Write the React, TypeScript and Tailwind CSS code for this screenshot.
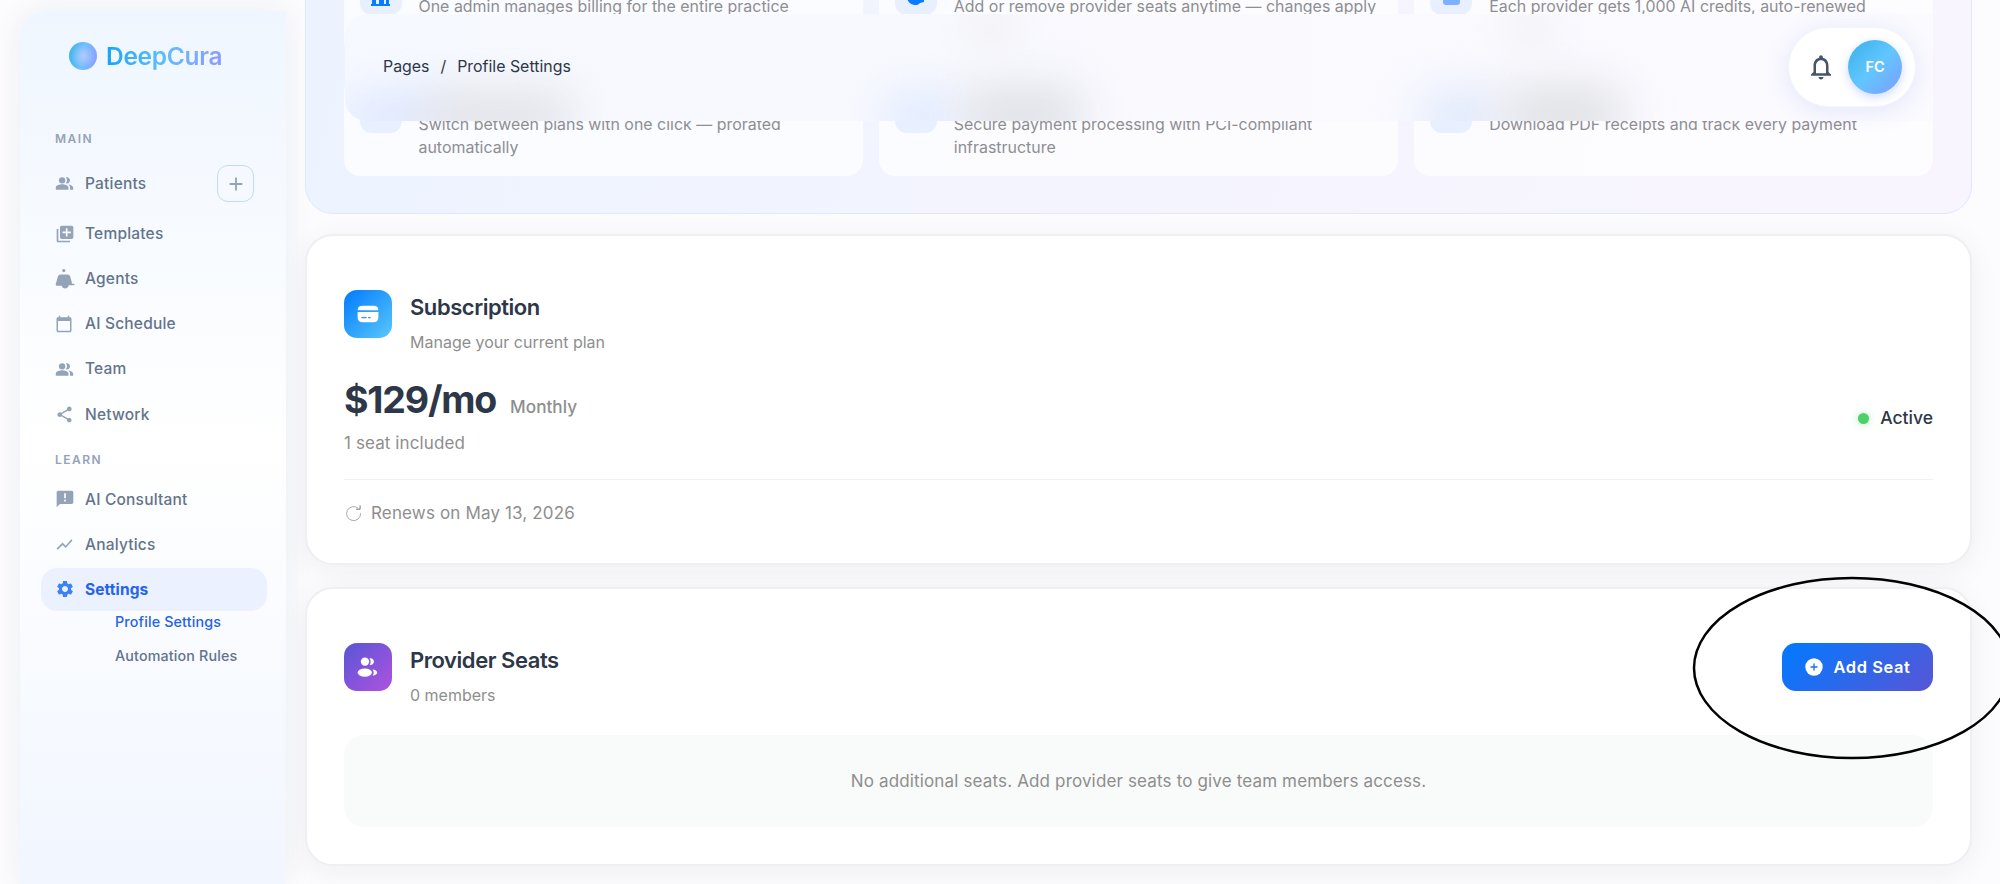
import type { ReactNode } from "react";
import { clsx } from "clsx";
import {
  MdAdd,
  MdAnnouncement,
  MdCalendarToday,
  MdLibraryAdd,
  MdNotificationsNone,
  MdPeopleAlt,
  MdSettings,
  MdShare,
  MdShowChart,
} from "react-icons/md";

function AgentIcon() {
  return (
    <svg width="20" height="20" viewBox="0 0 20 20" fill="currentColor">
      <circle cx="8.8" cy="1.6" r="1.6" />
      <path d="M5.8 5.4h6.4c1.6 0 2.6.8 3 2.2l2 7.1h1.500c.5 0 .8.400.8.900 0 .4-.3.700-.8.700h-4.900c-.5 1.900-1.800 3.100-3.600 3.100-1.900 0-3.200-1-3.600-2.600H2.200c-1.200 0-1.700-.8-1.400-1.900L2.900 7.600C3.300 6.200 4.300 5.400 5.800 5.400z" />
    </svg>
  );
}

function CardIcon() {
  return (
    <svg width="22" height="18" viewBox="0 0 22 18">
      <path d="M.6 5.300C.8 2.200 2.400.8 5.500.8h11c3.100 0 4.700 1.400 4.900 4.500z" fill="white" />
      <path d="M.6 6.900h20.800v5c0 3.400-1.600 5.300-5 5.300H5.600c-3.400 0-5-1.900-5-5.300z" fill="white" />
      <path d="M4.800 12.700h4.300M11.600 12.700h1.600" stroke="#2f95ff" strokeWidth="1.200" strokeLinecap="round" />
    </svg>
  );
}

function MembersIcon() {
  return (
    <svg width="22" height="20" viewBox="0 0 22 20" fill="white">
      <circle cx="8" cy="4.600" r="4.200" />
      <ellipse cx="7.800" cy="15.600" rx="7.200" ry="4.200" />
      <path d="M12.600 1.200c2.500-.4 4.300 1.200 4.300 3.400 0 2.300-1.800 3.800-4.300 3.400 1.400-2.100 1.400-4.700 0-6.800z" />
      <path d="M15.500 12.600c2.700.2 4.700 1.400 4.700 3s-1.900 2.900-4.600 3.100c1.500-1.800 1.500-4.300-.1-6.100z" />
    </svg>
  );
}

function NavItem({ icon, label, active, action }: { icon: ReactNode; label: string; active?: boolean; action?: ReactNode }) {
  return (
    <div
      className={clsx(
        "flex h-[43px] items-center rounded-[16px] pl-[14px] pr-[13px] text-[15.500px]",
        active ? "bg-[#ebf1ff] font-bold tracking-[0.1px] text-[#2563eb]" : "font-medium tracking-[0.2px] text-[#64748b]",
      )}
    >
      <span className={clsx("flex w-[30px] shrink-0 items-center", active ? "text-[#3b82f6]" : "text-[#94a3b8]")}>{icon}</span>
      <span className="flex-1">{label}</span>
      {action}
    </div>
  );
}

function Sidebar() {
  return (
    <aside className="mt-[11px] ml-5 h-[873px] w-[266px] shrink-0 rounded-tl-[26px] bg-linear-to-b from-[#eff6ff] via-white to-[#f1f6ff] pr-[19px] pl-[21px] shadow-[0_0_30px_rgba(30,41,90,0.07)]">
      <div className="flex h-[89px] items-center gap-[9px] pl-[28px]">
        <div className="size-7 rounded-full bg-[radial-gradient(circle_at_50%_50%,rgba(200,205,255,0.75),transparent_60%),linear-gradient(100deg,#3db4e6,#6fc0ff_50%,#8f9cff)]" />
        <div className="bg-linear-to-r from-[#0ea5f5] via-[#5cbcff] to-[#8d9bff] bg-clip-text text-[24.500px] leading-[34px] font-semibold tracking-[-0.300px] text-transparent">
          DeepCura
        </div>
      </div>

      <div className="mt-[30px] pl-[14px] text-[12px] leading-[18px] font-semibold tracking-[1.500px] text-[#94a3b8]">MAIN</div>
      <div className="mt-[14px]">
        <NavItem
          icon={<MdPeopleAlt size={19} />}
          label="Patients"
          action={
            <div className="flex size-[37px] items-center justify-center rounded-[11px] border-[1.500px] border-[#c3dafe] text-[#94a3b8]">
              <MdAdd size={22} />
            </div>
          }
        />
      </div>
      <div className="mt-[7px] flex flex-col gap-[2.200px]">
        <NavItem icon={<MdLibraryAdd size={20} />} label="Templates" />
        <NavItem icon={<AgentIcon />} label="Agents" />
        <NavItem icon={<MdCalendarToday size={18} />} label="AI Schedule" />
        <NavItem icon={<MdPeopleAlt size={19} />} label="Team" />
        <NavItem icon={<MdShare size={19} />} label="Network" />
      </div>

      <div className="mt-[15px] pl-[14px] text-[12px] leading-[18px] font-semibold tracking-[1.500px] text-[#94a3b8]">LEARN</div>
      <div className="mt-[9px] flex flex-col gap-[2px]">
        <NavItem icon={<MdAnnouncement size={20} />} label="AI Consultant" />
        <NavItem icon={<MdShowChart size={19} />} label="Analytics" />
        <NavItem icon={<MdSettings size={20} />} label="Settings" active />
      </div>
      <div className="pl-[74px] text-[14.300px] leading-[34px] font-medium tracking-[0.15px] text-[#64748b]">
        <div className="-mt-[6px] text-[#2563eb]">Profile Settings</div>
        <div>Automation Rules</div>
      </div>
    </aside>
  );
}

const TOP_FEATURES = [
  "One admin manages billing for the entire practice",
  "Add or remove provider seats anytime — changes apply",
  "Each provider gets 1,000 AI credits, auto-renewed",
];

const BOTTOM_FEATURES = [
  "Switch between plans with one click — prorated automatically",
  "Secure payment processing with PCI-compliant infrastructure",
  "Download PDF receipts and track every payment",
];

const FEATURE_ICONS = [
  <path key="a" d="M1 12V4h4v8h3V0h5v12h2V5h3v7h2v2H0v-2z" fill="#0a7cff" />,
  <path key="b" d="M2 9c3 5 10 5 12 2l4-1v-5H1z" fill="#0a7cff" />,
  <rect key="c" x="1" y="0" width="17" height="13" rx="3" fill="#7fb0ff" />,
];

function Feature({ text, icon }: { text: string; icon?: ReactNode }) {
  return (
    <div className="flex h-[101px] gap-[17px] rounded-[16px] bg-white/70 px-4 pt-4">
      <div className="flex size-[42px] shrink-0 items-end justify-center rounded-[12px] bg-[#e8f0ff] pb-[9px]">
        {icon && (
          <svg width="19" height="14" viewBox="0 0 19 14">
            {icon}
          </svg>
        )}
      </div>
      <p className="mt-[23px] w-[440px] text-[15.950px] leading-[22.500px] text-[#8e8e93]">{text}</p>
    </div>
  );
}

function Hero() {
  return (
    <section className="-mt-[84px] h-[298px] rounded-[28px] border-[1.500px] border-[#dde9fe] bg-linear-[105deg,#ecf3ff_0%,#f4f4fe_50%,#f9f5fe_100%] px-[37.500px] pt-[40px]">
      <div className="grid grid-cols-3 gap-x-4 gap-y-[17px]">
        {TOP_FEATURES.map((text, i) => (
          <Feature key={text} text={text} icon={FEATURE_ICONS[i]} />
        ))}
        {BOTTOM_FEATURES.map((text) => (
          <Feature key={text} text={text} />
        ))}
      </div>
    </section>
  );
}

// Frosted bar that floats over the scrolled page
function TopBar() {
  return (
    <header className="absolute top-[14px] left-[345px] h-[107px] w-[1588px]">
      <div className="absolute inset-0 overflow-hidden rounded-l-[22px] bg-linear-to-r from-[#f6f9ff] via-[#f9f9fe] to-[#fbfaff]">
        <div className="absolute top-[74px] -left-[5px] h-[60px] w-[110px] rounded-full bg-[#e2eaff] blur-[20px]" />
        <div className="absolute top-[76px] left-[75px] h-[52px] w-[155px] rounded-full bg-[#e2e3e8] blur-[22px]" />
        <div className="absolute top-[74px] left-[535px] h-[60px] w-[80px] rounded-full bg-[#e2ecff] blur-[20px]" />
        <div className="absolute top-[72px] left-[615px] h-[56px] w-[125px] rounded-full bg-[#e0e1e7] blur-[22px]" />
        <div className="absolute -top-[14px] left-[615px] h-[60px] w-[60px] rounded-full bg-[#f4f4f8] blur-[14px]" />
        <div className="absolute top-[74px] left-[1075px] h-[60px] w-[80px] rounded-full bg-[#e1eafb] blur-[20px]" />
        <div className="absolute top-[72px] left-[1155px] h-[56px] w-[125px] rounded-full bg-[#e0e1e5] blur-[22px]" />
        <div className="absolute -top-[14px] left-[1155px] h-[60px] w-[60px] rounded-full bg-[#f5f5f9] blur-[14px]" />
      </div>
      <div className="relative flex h-full items-center justify-between pr-[17px] pb-px pl-[38px]">
        <nav className="flex gap-[11px] text-[15.900px] text-[#2d3748]">
          <span>Pages</span>
          <span>/</span>
          <span>Profile Settings</span>
        </nav>
        <div className="flex h-20 w-[128px] items-center justify-between rounded-[40px] border border-[#f0f5ff] bg-white pr-[13px] pl-[17px] shadow-[0_4px_24px_rgba(100,110,220,0.14)]">
          <MdNotificationsNone size={30} className="text-[#475569]" />
          <div className="flex size-[54px] items-center justify-center rounded-full bg-linear-[135deg,#38b0e8_0%,#62c6ff_50%,#7f9bff_100%] text-[14.500px] font-semibold text-white shadow-[0_3px_10px_rgba(90,130,255,0.3)]">
            FC
          </div>
        </div>
      </div>
    </header>
  );
}

const CARD = "rounded-[28px] border-2 border-[#efeff1] bg-white px-[37px] pt-[54px] shadow-[0_6px_30px_rgba(30,41,70,0.06)]";

function SectionTitle({ title, subtitle }: { title: string; subtitle: string }) {
  return (
    <div className="-mt-px">
      <h2 className="text-[22px] leading-[36px] font-semibold tracking-[-0.450px] text-[#2d3748]">{title}</h2>
      <p className="mt-[4px] text-[16px] leading-[26px] text-[#8e8e8e]">{subtitle}</p>
    </div>
  );
}

function Subscription() {
  return (
    <section className={clsx(CARD, "mt-[20px] h-[331px]")}>
      <div className="flex gap-[18px]">
        <div className="flex size-[48px] items-center justify-center rounded-[13px] bg-linear-[135deg,#007aff,#5ac8fa]">
          <CardIcon />
        </div>
        <SectionTitle title="Subscription" subtitle="Manage your current plan" />
      </div>
      <div className="mt-[21px] flex items-center justify-between">
        <div>
          <div className="flex items-baseline gap-[14px]">
            <span className="text-[37.500px] leading-[48px] font-bold tracking-[-1.200px] text-[#2d3748]">$129/mo</span>
            <span className="text-[17.200px] font-medium text-[#8e8e8e]">Monthly</span>
          </div>
          <div className="mt-[6px] text-[17px] leading-[26px] tracking-[0.1px] text-[#8e8e8e]">1 seat included</div>
        </div>
        <div className="mt-[5px] flex items-center gap-[11px] text-[17.500px] font-medium text-[#2d3748]">
          <span className="size-[11px] rounded-full bg-[#4cd06a] shadow-[0_0_9px_rgba(52,199,89,0.4)]" />
          Active
        </div>
      </div>
      <div className="mt-[23px] flex items-center gap-[8px] border-t border-[#eef0f1] pt-[20px] text-[17px] leading-[26px] tracking-[0.150px] text-[#8e8e8e]">
        <svg width="19" height="19" viewBox="0 0 19 19" fill="none" stroke="#aaaaaa" strokeWidth="1">
          <path d="M14.300 4.400A7 7 0 1 0 16.600 9.200" />
          <path d="M16.100 1.500v3.700h-3.900" stroke="#777777" />
        </svg>
        Renews on May 13, 2026
      </div>
    </section>
  );
}

function ProviderSeats() {
  return (
    <section className={clsx(CARD, "mt-[22px] h-[279px]")}>
      <div className="flex items-start gap-[18px]">
        <div className="flex size-[48px] items-center justify-center rounded-[13px] bg-linear-[135deg,#5856d6,#af52de]">
          <MembersIcon />
        </div>
        <SectionTitle title="Provider Seats" subtitle="0 members" />
        <button className="ml-auto flex h-[48px] w-[151px] items-center justify-center gap-[11px] rounded-[14px] bg-linear-[135deg,#007aff,#5856d6] text-[16.500px] font-semibold tracking-[0.550px] text-white">
          <svg width="18" height="18" viewBox="0 0 18 18">
            <circle cx="9" cy="9" r="8.700" fill="white" />
            <path d="M9 6v6M6 9h6" stroke="#1670f5" strokeWidth="1.300" strokeLinecap="round" />
          </svg>
          Add Seat
        </button>
      </div>
      <div className="mt-[27px] flex h-[92px] items-center justify-center rounded-[20px] bg-[#f9fafa] pt-px text-[17px] tracking-[0.150px] text-[#8e8e8e]">
        No additional seats. Add provider seats to give team members access.
      </div>
    </section>
  );
}

export default function App() {
  return (
    <div className="relative flex h-[884px] w-[2000px] overflow-hidden bg-[#fcfcfe] font-['Inter',sans-serif]">
      <Sidebar />
      <main className="ml-[19px] w-[1667px]">
        <Hero />
        <Subscription />
        <ProviderSeats />
      </main>
      <TopBar />
      {/* hand-drawn highlight around the Add Seat button */}
      <svg className="absolute top-[570px] left-[1690px]" width="310" height="200" viewBox="0 0 310 200" fill="none">
        <ellipse cx="162" cy="98" rx="158" ry="90" stroke="black" strokeWidth="2.500" />
      </svg>
    </div>
  );
}
